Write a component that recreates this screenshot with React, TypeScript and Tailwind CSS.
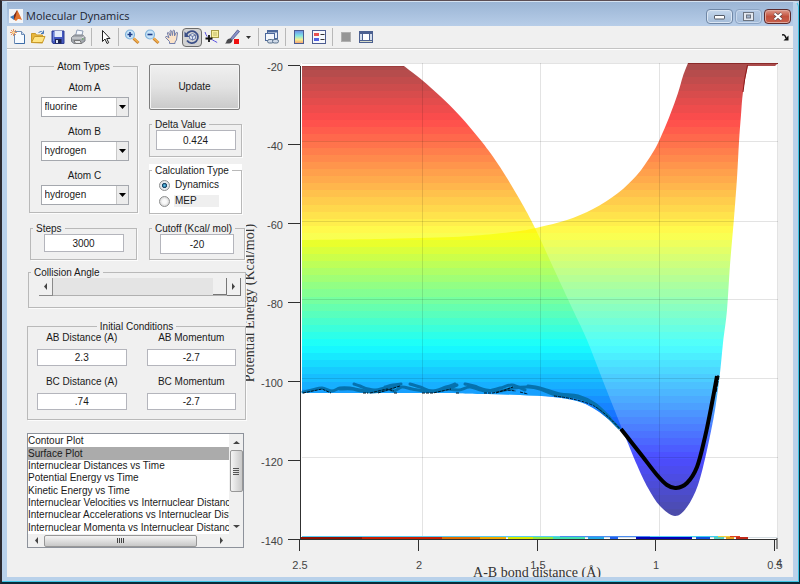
import { useState } from "react";
import type { ReactNode } from "react";

type Point = [number, number];

const plotNames = [
  "Contour Plot",
  "Surface Plot",
  "Internuclear Distances vs Time",
  "Potential Energy vs Time",
  "Kinetic Energy vs Time",
  "Internuclear Velocities vs Internuclear Distance",
  "Internuclear Accelerations vs Internuclear Distance",
  "Internuclear Momenta vs Internuclear Distance",
];

// Catmull-Rom spline through the points, as cubic bezier segments
function curve(points: Point[]) {
  return points
    .slice(0, -1)
    .map((p1, i) => {
      const p0 = points[i - 1] ?? p1;
      const p2 = points[i + 1];
      const p3 = points[i + 2] ?? p2;
      const c1 = [p1[0] + (p2[0] - p0[0]) / 6, p1[1] + (p2[1] - p0[1]) / 6];
      const c2 = [p2[0] - (p3[0] - p1[0]) / 6, p2[1] - (p3[1] - p1[1]) / 6];
      return `C${c1.join(" ")} ${c2.join(" ")} ${p2.join(" ")}`;
    })
    .join(" ");
}

const SURFACE_TOP = 63;
const SURFACE_BOTTOM = 516;
const LEVELS = 64;

// jet colormap, t = 0 is dark blue and t = 1 is dark red
function jet(t: number) {
  const channel = (center: number) =>
    Math.round(255 * Math.max(0, Math.min(1, 1.5 - Math.abs(4 * t - center))));
  return `rgb(${channel(3)}, ${channel(2)}, ${channel(1)})`;
}

const jetStops = Array.from({ length: LEVELS }, (_, i) => ({
  color: jet(1 - (i + 0.5) / LEVELS),
  from: i / LEVELS,
  to: (i + 1) / LEVELS,
}));

const backEdge: Point[] = [
  [404, 66], [422, 80], [440, 96], [460, 116], [482, 142], [500, 167], [520, 200],
  [535, 228], [553, 267], [573, 310], [587, 340], [603, 381], [623, 431],
];
const channelFloor: Point[] = [
  [623, 431], [607, 418], [593, 408], [577, 401], [553, 397], [520, 395], [480, 394], [430, 393], [302, 393],
];
const frontTop: Point[] = [
  [302, 240], [380, 239], [453, 237], [493, 234], [520, 231], [540, 227], [567, 220], [593, 209],
  [618, 193], [637, 175], [650, 157], [659, 141], [670, 115], [678, 93], [683, 76], [688, 63],
];
const frontRight: Point[] = [
  [748, 65], [743, 92], [741, 115], [739, 142], [737, 178], [734, 218], [730, 265], [727, 310],
  [723, 343], [720, 373], [715, 410], [707, 450], [698, 485], [687, 507], [675, 516], [660, 506],
  [648, 488], [637, 465], [623, 431],
];
const trajectory: Point[] = [
  [621, 429], [632, 443], [643, 457], [657, 475], [667, 485], [676, 488], [687, 483], [697, 467],
  [705, 437], [712, 403], [717, 376],
];
const ripples: Point[][] = [
  [[303, 392], [312, 390], [322, 388], [332, 391], [340, 388], [350, 388], [360, 390], [372, 392], [385, 390], [399, 385]],
  [[340, 389], [352, 389], [362, 391], [376, 390], [386, 388], [394, 391], [402, 387], [412, 389], [425, 391], [437, 391], [450, 388], [457, 385]],
  [[354, 384], [360, 386], [368, 389], [380, 391]],
  [[385, 387], [393, 385], [401, 384]],
  [[410, 384], [420, 387], [432, 391], [446, 387], [455, 384]],
  [[446, 389], [459, 390], [470, 387], [485, 391], [500, 388], [512, 385], [525, 390]],
  [[465, 384], [474, 386], [486, 390], [500, 391], [514, 388], [528, 387], [540, 389], [556, 395], [575, 397], [592, 403], [606, 415], [619, 428]],
  [[528, 386], [540, 388], [560, 394], [578, 396], [595, 404], [610, 418]],
];

const floorBands = [
  { x: 300, w: 62, color: "#8f1000" },
  { x: 362, w: 80, color: "#c81e00" },
  { x: 442, w: 38, color: "#e06c00" },
  { x: 480, w: 26, color: "#f0a800" },
  { x: 508, w: 25, color: "#d8e800" },
  { x: 533, w: 20, color: "#90e840" },
  { x: 553, w: 32, color: "#40e0b0" },
  { x: 588, w: 16, color: "#20a8e8" },
  { x: 610, w: 8, color: "#2060f0" },
  { x: 636, w: 56, color: "#0000b8" },
  { x: 696, w: 14, color: "#1050e0" },
  { x: 714, w: 10, color: "#50d0c0" },
  { x: 726, w: 8, color: "#e8a020" },
  { x: 736, w: 12, color: "#c02818" },
];

const yTicks = [
  { y: 66, label: "-20" },
  { y: 145, label: "-40" },
  { y: 224, label: "-60" },
  { y: 303, label: "-80" },
  { y: 382, label: "-100" },
  { y: 461, label: "-120" },
  { y: 540, label: "-140" },
];
const xTicks = [
  { x: 300, label: "2.5" },
  { x: 419, label: "2" },
  { x: 538, label: "1.5" },
  { x: 656, label: "1" },
  { x: 775, label: "0.5" },
];

function SurfaceChart() {
  const backPath = `M302 66 L404 66 ${curve(backEdge)} ${curve(channelFloor)} Z`;
  const frontPath = `M302 240 ${curve(frontTop)} L778 63 L775 66 L748 66 L748 65 ${curve(frontRight)} ${curve(channelFloor)} Z`;

  return (
    <svg viewBox="246 50 547 527" className="block h-auto w-full" role="img" aria-label="Surface plot">
      <defs>
        <linearGradient id="jet" gradientUnits="userSpaceOnUse" x1="0" x2="0" y1={SURFACE_TOP} y2={SURFACE_BOTTOM}>
          {jetStops.flatMap((s, i) => [
            <stop key={`${i}a`} offset={s.from} stopColor={s.color} />,
            <stop key={`${i}b`} offset={s.to} stopColor={s.color} />,
          ])}
        </linearGradient>
      </defs>

      <rect x="301" y="63" width="477" height="477" fill="#fff" />

      <path d={backPath} fill="url(#jet)" fillOpacity="0.7" />
      <path d={frontPath} fill="url(#jet)" fillOpacity="0.7" />
      <path d="M688 63.5 H778" stroke="#9c3030" />
      <path d="M302 66.5 H404" stroke="#9c3c3c" />
      <path d="M747.500 65 Q744 80 743 92" fill="none" stroke="#8c1818" />

      {/* Grid */}
      <g stroke="#000" strokeOpacity="0.11">
        {[422.5, 540.5, 659.5, 777.5].map((x) => (
          <path key={x} d={`M${x} 63 V538`} />
        ))}
        {[63.5, 141.5, 221.5, 299.5, 378.5, 457.5].map((y) => (
          <path key={y} d={`M302 ${y} H778`} />
        ))}
      </g>

      {/* Trajectory */}
      <g fill="none" stroke="#0672ae" strokeWidth="3" strokeLinejoin="round" strokeLinecap="round">
        {ripples.map((points, i) => (
          <path key={i} d={`M${points[0].join(" ")} ${curve(points)}`} />
        ))}
      </g>
      <g fill="none" stroke="#001420" strokeDasharray="3 1">
        <path d="M303 393 L322 389 L331 393 M363 393 H368 M370 393 L387 389 L394 391 M378 393 L400 386" />
        <path d="M394 393 H397 M422 393 H433 L451 389 M456 393 H459 M484 393 H493 L507 390 L516 391 M496 393 L513 387" />
        <path d="M520 392 L528 394 M554 396 Q580 399 594 406 Q606 413 621 430" />
      </g>
      <path d={`M621 429 ${curve(trajectory)}`} fill="none" stroke="#000" strokeWidth="4" />
      <path d="M717 376 H719 L716 392" fill="none" stroke="#000" strokeDasharray="6 1" />

      {/* Contours projected on the floor */}
      <rect x="302" y="536" width="410" height="1" fill="#58cdf5" />
      <rect x="560" y="536" width="90" height="1" fill="#4c8cf0" />
      <rect x="302" y="537" width="476" height="1" fill="#d5dde2" />
      {floorBands.map((b) => (
        <rect key={b.x} x={b.x} y="537" width={b.w} height="2" fill={b.color} />
      ))}
      <path d="M690 536.5 H718" stroke="#40d0f0" />
      <path d="M718 536.5 H730" stroke="#f0d040" />
      <path d="M730 536.5 H740" stroke="#e04020" />

      {/* Axes */}
      <g stroke="#303030" fill="none">
        <path d="M300.5 66 V540 M300 539.5 H777" />
        <path d="M777 538 L777 549" />
        {yTicks.map((t) => (
          <path key={t.label} d={`M288 ${t.y - 0.5} H300`} />
        ))}
        {xTicks.map((t) => (
          <path key={t.label} d={`M${t.x - 0.5} 540 V551`} />
        ))}
      </g>
      <g fill="#444" fontSize="11" fontFamily='"Liberation Sans", Arial, sans-serif'>
        {yTicks.map((t) => (
          <text key={t.label} x="283" y={t.y + 5} textAnchor="end">{t.label}</text>
        ))}
        {xTicks.map((t) => (
          <text key={t.label} x={t.x} y="569" textAnchor="middle">{t.label}</text>
        ))}
        <text x="776" y="567">4</text>
      </g>
      <g fill="#333" fontSize="14" fontFamily='"Liberation Serif", "Times New Roman", serif'>
        <text x="537" y="577" textAnchor="middle">A-B bond distance (Å)</text>
        <text transform="translate(254 303) rotate(-90)" textAnchor="middle">Potential Energy (Kcal/mol)</text>
      </g>
    </svg>
  );
}

function Icon({ children }: { children: ReactNode }) {
  return (
    <svg viewBox="0 0 16 16" className="h-4 w-4" aria-hidden="true">
      {children}
    </svg>
  );
}

const toolGroups: { name: string; icon: ReactNode }[][] = [
  [
    {
      name: "New Figure",
      icon: (
        <>
          <path d="M4.5 2.5h7l3 3v9h-10z" fill="#f6faff" stroke="#6f8cb4" />
          <path d="M11.5 2.5v3h3" fill="#c5d8f0" stroke="#6f8cb4" />
          <path d="M14.5 6v8.5h-9" stroke="#3f6ea8" fill="none" />
          <path d="M3.5 0v7M0 3.5h7M1 1l5 5M6 1L1 6" stroke="#e07a3c" strokeWidth=".8" />
          <circle cx="3.5" cy="3.5" r="1.3" fill="#ffe0a0" />
        </>
      ),
    },
    {
      name: "Open File",
      icon: (
        <>
          <path d="M1.5 13.5v-9h4l1 1.5h6v8z" fill="#e8b63c" stroke="#c99a2a" />
          <path d="M1.5 13.5l3-6h10.5l-2.5 6z" fill="#ffe482" stroke="#c99a2a" />
          <path d="M8.5 3.5q3-2.5 5 .5M13.5 1.5v3h-2.5" fill="none" stroke="#4878b8" />
        </>
      ),
    },
    {
      name: "Save Figure",
      icon: (
        <>
          <path d="M2 2h12v12.5H3L2 13z" fill="#4458c0" stroke="#2c3c94" />
          <rect x="4.5" y="2" width="7.5" height="6" fill="#e4ecfa" />
          <rect x="5" y="10" width="6.5" height="4.5" fill="#1c2450" />
          <rect x="6" y="11" width="2" height="3" fill="#dfe6f5" />
          <path d="M3.5 3v9" stroke="#6f86dc" />
        </>
      ),
    },
    {
      name: "Print Figure",
      icon: (
        <>
          <path d="M5.5 7l1.5-6 6 1-1.5 6z" fill="#f4f8ff" stroke="#8d9cb4" />
          <path d="M1.5 8.5l3-2.5h8l2.5 2v4l-3.5 2.5H4l-2.5-2z" fill="#a2a6ac" stroke="#7c8088" />
          <path d="M2 9h9.5l3-1.5" fill="none" stroke="#dfe1e4" />
          <path d="M4 11.5h6l1.5 3H5.5z" fill="#e6e7e9" stroke="#777" />
          <circle cx="12.8" cy="10" r=".7" fill="#55b04c" />
        </>
      ),
    },
  ],
  [
    {
      name: "Edit Plot",
      icon: <path d="M5.5 1.5v11l2.5-2.5 2 4.5 1.7-.8-2-4.2h3.300z" fill="#fff" stroke="#222" />,
    },
  ],
  [
    {
      name: "Zoom In",
      icon: (
        <>
          <path d="M9.5 9.5l5 4.500" stroke="#c88434" strokeWidth="3" />
          <path d="M9.5 9l5 4.500" stroke="#f4b04c" strokeWidth="1.500" />
          <circle cx="6" cy="5.5" r="4.500" fill="#c8e4f8" stroke="#82b4dc" strokeWidth="1.200" />
          <path d="M6 3v5M3.5 5.5h5" stroke="#1d3c88" strokeWidth="1.600" />
        </>
      ),
    },
    {
      name: "Zoom Out",
      icon: (
        <>
          <path d="M9.5 9.5l5 4.500" stroke="#c88434" strokeWidth="3" />
          <path d="M9.5 9l5 4.500" stroke="#f4b04c" strokeWidth="1.500" />
          <circle cx="6" cy="5.5" r="4.500" fill="#c8e4f8" stroke="#82b4dc" strokeWidth="1.200" />
          <path d="M3.5 5.5h5" stroke="#1d3c88" strokeWidth="1.600" />
        </>
      ),
    },
    {
      name: "Pan",
      icon: (
        <path
          d="M5.5 14.5v-2L1.5 8.5q0-1.5 1.5-1l2 1.5-1.7-5q.5-1.5 1.5 0L6.5 7 6 2q.8-1.3 1.6 0l.8 4.500L9 1.500q1-1 1.5.2V7l1.700-3.500q1.200-.7 1.300.5L12.500 11l-1.500 2v1.500z"
          fill="#fbe3c8"
          stroke="#7480ac"
        />
      ),
    },
    {
      name: "Rotate 3D",
      icon: (
        <>
          <path d="M2.5 5.5A6 6 0 1 1 3 11.5" fill="none" stroke="#3c5088" strokeWidth="1.800" />
          <path d="M.5 2.5v5.500h5z" fill="#3c5088" />
          <path d="M8.5 4.5l3 1.500v3.500l-3 1.500-3-1.500V6zM5.500 6l3 1.500 3-1.500M8.500 7.500v3.500" fill="#dbe4f4" stroke="#5468a0" strokeWidth=".8" />
        </>
      ),
    },
    {
      name: "Data Cursor",
      icon: (
        <>
          <path d="M1 3q2 6 5 7t8 4" fill="none" stroke="#5a50e0" strokeDasharray="5 1" />
          <rect x="7.5" y="1.5" width="7" height="7" fill="#f7f0a0" stroke="#a59c4c" />
          <path d="M9 4h4M9 6h4" stroke="#c0b870" />
          <path d="M5 6v7M1.5 9.5h7" stroke="#111" strokeWidth="1.800" />
        </>
      ),
    },
    {
      name: "Brush",
      icon: (
        <>
          <path d="M6.5 9.5l7-8.500 2 1.500-7 8z" fill="#8a93cc" stroke="#4c5688" strokeWidth=".8" />
          <path d="M1 14.5q1.500-1 1.700-3 1.500-2.500 3.800-2l2 1.700q-.5 3-3.500 3.300z" fill="#4a4a4e" />
          <rect x="10" y="10" width="5" height="5" fill="#f01010" />
        </>
      ),
    },
  ],
  [
    {
      name: "Link Plot",
      icon: (
        <>
          <rect x="3.5" y="1.5" width="10" height="8" fill="#e8effa" stroke="#4c689c" />
          <path d="M3.5 2.5h10" stroke="#4c689c" strokeWidth="2" />
          <rect x="1.5" y="4.5" width="9" height="7" fill="#f4f7fc" stroke="#4c689c" />
          <rect x="3.5" y="10.5" width="6" height="3.500" rx="1.700" fill="#d0dae8" stroke="#58708c" />
          <rect x="8.5" y="10.5" width="6" height="3.500" rx="1.700" fill="#d0dae8" stroke="#58708c" />
        </>
      ),
    },
  ],
  [
    {
      name: "Insert Colorbar",
      icon: (
        <>
          <defs>
            <linearGradient id="bar" x1="0" x2="0" y1="0" y2="1">
              <stop offset="0" stopColor="#6c8ce8" />
              <stop offset=".4" stopColor="#80e4e4" />
              <stop offset=".7" stopColor="#f4f090" />
              <stop offset="1" stopColor="#f49a70" />
            </linearGradient>
          </defs>
          <rect x="3.5" y="1.5" width="9" height="13" fill="url(#bar)" stroke="#4c5c90" />
        </>
      ),
    },
    {
      name: "Insert Legend",
      icon: (
        <>
          <rect x="1.5" y="1.5" width="13" height="13" fill="#f6f8fc" stroke="#4c5c90" />
          <rect x="3" y="4" width="5" height="3" fill="#e85050" />
          <rect x="3" y="9" width="5" height="3" fill="#5060e0" />
          <path d="M9.5 5.5h4M9.5 10.5h4" stroke="#333" />
        </>
      ),
    },
  ],
  [
    {
      name: "Hide Plot Tools",
      icon: <rect x="3.5" y="3.5" width="9" height="9" fill="#969696" stroke="#b0b0b0" />,
    },
    {
      name: "Show Plot Tools",
      icon: (
        <>
          <rect x="1" y="2" width="14" height="12" fill="#4c6090" />
          <rect x="2" y="5" width="2" height="6" fill="#d4ddec" />
          <rect x="5" y="5" width="6" height="6" fill="#fff" />
          <rect x="12" y="5" width="2" height="6" fill="#d4ddec" />
          <rect x="2" y="12" width="12" height="1" fill="#d8dcc8" />
        </>
      ),
    },
  ],
];

function Toolbar() {
  return (
    <div role="toolbar" className="flex h-[23px] items-center border-b border-[#c4c4c4] bg-[#f0f0f0] pl-px">
      {toolGroups.map((group, g) => (
        <div key={g} className="flex items-center">
          {g > 0 && <div className="mx-[3px] h-[18px] w-px bg-[#b8b8b8]" />}
          {group.map((tool) => (
            <button
              key={tool.name}
              type="button"
              aria-label={tool.name}
              className={
                tool.name === "Rotate 3D"
                  ? "flex h-[19px] w-5 items-center justify-center rounded-sm border border-[#6c6c6c] bg-[#d2d2d2]"
                  : "flex h-5 w-5 items-center justify-center"
              }
            >
              <Icon>{tool.icon}</Icon>
            </button>
          ))}
          {g === 2 && (
            <button type="button" aria-label="Brush options" className="flex h-5 w-[13px] items-center justify-center">
              <svg viewBox="0 0 5 3" className="w-[5px]"><path d="M0 0h5L2.5 3z" fill="#333" /></svg>
            </button>
          )}
        </div>
      ))}
      <button type="button" aria-label="Dock Figure" className="mr-1 ml-auto">
        <svg viewBox="0 0 7 7" className="block w-[7px]">
          <path d="M0 1q3-1 4 3" stroke="#111" strokeWidth="1.500" fill="none" />
          <path d="M6.5 1.5V6.5H1.5z" fill="#111" />
        </svg>
      </button>
    </div>
  );
}

function TitleBar() {
  return (
    <header className="flex h-6 items-center bg-gradient-to-b from-[#9bb5d5] to-[#b7cde8] pt-1 pr-[2px] pl-[2px]">
      <svg viewBox="0 0 14 14" className="h-[14px] w-[14px]" aria-hidden="true">
        <rect width="14" height="14" fill="#f3f5f8" />
        <path d="M1 8l4-2 2-2 1 5-3 2z" fill="#3f78b8" />
        <path d="M5 6l3-5 1 3-2 6-2 1z" fill="#7c2c18" />
        <path d="M8 1q2 3 5 10-3-1.500-4-1l-2 2-2-1.500Q7 8 8 1z" fill="#e0702c" />
      </svg>
      <h1 className="ml-[3px] font-['Open_Sans','Noto_Sans',sans-serif] text-[11px] leading-4 text-[#1c2430]">Molecular Dynamics</h1>
      <div className="ml-auto flex gap-[2px]">
        <button type="button" aria-label="Minimize" className="flex h-[15px] w-[27px] items-center justify-center rounded-sm border border-[#6f87a6] bg-gradient-to-b from-[#c6d8ec] to-[#a3bbd8] shadow-[inset_0_0_0_1px_#dbe6f3]">
          <svg viewBox="0 0 11 5" className="mt-[3px] w-[11px]"><rect x=".5" y=".5" width="10" height="3.500" rx=".5" fill="#fff" stroke="#555c68" /></svg>
        </button>
        <button type="button" aria-label="Maximize" className="flex h-[15px] w-[27px] items-center justify-center rounded-sm border border-[#8ba3c2] bg-gradient-to-b from-[#b4c9e3] to-[#a3bbd8] shadow-[inset_0_0_0_1px_#c8d8ec]">
          <svg viewBox="0 0 11 9" className="w-[11px]">
            <rect x=".5" y=".5" width="10" height="8" fill="#e4e9f0" stroke="#6c7480" />
            <rect x="3.5" y="3" width="4" height="3" fill="#a3b4cc" stroke="#6c7480" />
          </svg>
        </button>
        <button type="button" aria-label="Close" className="flex h-[15px] w-[27px] items-center justify-center rounded-sm border border-[#5c2a2c] bg-gradient-to-b from-[#dd9a8c] via-[#c2503c] to-[#c8604c] shadow-[inset_0_0_0_1px_#e0a89c]">
          <svg viewBox="0 0 10 9" className="w-[10px]">
            <path d="M1.5 1.5l7 6M8.5 1.5l-7 6" stroke="#5c4448" strokeWidth="3.600" />
            <path d="M1.5 1.5l7 6M8.5 1.5l-7 6" stroke="#fff" strokeWidth="2.200" />
          </svg>
        </button>
      </div>
    </header>
  );
}

function Panel({ title, className, center, children }: { title: string; className: string; center?: boolean; children: ReactNode }) {
  return (
    <fieldset className={`border border-[#b9b9b9] shadow-[1px_1px_0_#fcfcfc] ${className}`}>
      <legend className={`h-3 px-[3px] leading-[14px] ${center ? "mx-auto" : "ml-[2px]"}`}>{title}</legend>
      {children}
    </fieldset>
  );
}

function AtomSelect({ label, value, onChange }: { label: string; value: string; onChange: (v: string) => void }) {
  return (
    <label className="flex flex-col items-center gap-[3px]">
      <span>{label}</span>
      <span className="relative block">
        <select
          value={value}
          onChange={(e) => onChange(e.target.value)}
          className="block h-5 w-[88px] appearance-none border border-[#a5a8ae] bg-white pl-[3px] text-[10px] leading-3"
        >
          <option>fluorine</option>
          <option>hydrogen</option>
        </select>
        <span className="pointer-events-none absolute inset-y-px right-px flex w-3 items-center justify-center border-l border-[#c8c8c8] bg-[#ececec]">
          <svg viewBox="0 0 7 4" className="w-[7px]"><path d="M0 0h7L3.5 4z" fill="#000" /></svg>
        </span>
      </span>
    </label>
  );
}

function NumberBox({ label, value, className }: { label: string; value: string; className: string }) {
  return (
    <input
      aria-label={label}
      defaultValue={value}
      className={`block min-w-0 border border-[#b4b5bc] bg-white text-center text-[10px] leading-3 ${className}`}
    />
  );
}

function Condition({ label, value }: { label: string; value: string }) {
  return (
    <label className="flex flex-col items-center gap-[5px]">
      <span>{label}</span>
      <NumberBox label={label} value={value} className="h-[17px] w-full" />
    </label>
  );
}

function Radio({ label, checked, onChange }: { label: string; checked: boolean; onChange: () => void }) {
  return (
    <label className="flex h-4 items-center gap-1">
      <input
        type="radio"
        name="calculation"
        checked={checked}
        onChange={onChange}
        className="h-[11px] w-[11px] appearance-none rounded-full border border-[#8e8f8f] bg-[#e8e8e8] bg-[radial-gradient(circle,#fafafa_30%,#d4d4d4_80%)] checked:bg-[radial-gradient(circle,#58c4ec_8%,#123c60_34%,#e4e8ec_46%)]"
      />
      <span className={label === "MEP" ? "w-[45px] bg-[#efefef] pl-px" : "pl-px"}>{label}</span>
    </label>
  );
}

function Arrow({ d }: { d: string }) {
  return (
    <svg viewBox="0 0 7 7" className="w-[7px]" aria-hidden="true">
      <path d={d} fill="#444" />
    </svg>
  );
}

function PlotList() {
  const [selected, setSelected] = useState("Surface Plot");

  return (
    <div className="grid h-[115px] w-[217px] grid-cols-[1fr_14px] grid-rows-[1fr_13px] border border-[#8d929b] bg-[#f0f0f0]">
      <ul role="listbox" aria-label="Plot type" className="grid auto-rows-fr overflow-hidden bg-white pt-px">
        {plotNames.map((name) => (
          <li
            key={name}
            role="option"
            aria-selected={name === selected}
            onClick={() => setSelected(name)}
            className={`flex items-center overflow-hidden leading-3 whitespace-nowrap ${name === selected ? "bg-[#ababab]" : ""}`}
          >
            {name}
          </li>
        ))}
      </ul>
      <div className="flex flex-col items-center">
        <button type="button" aria-label="Scroll up" className="flex h-4 items-center"><Arrow d="M0 5h7L3.5 2z" /></button>
        <div className="flex h-[42px] w-[13px] flex-col items-center justify-center gap-px rounded-xs border border-[#979797] bg-gradient-to-r from-[#f5f5f5] to-[#c8c8c8]">
          <i className="h-px w-[6px] bg-[#555]" />
          <i className="h-px w-[6px] bg-[#555]" />
          <i className="h-px w-[6px] bg-[#555]" />
          <i className="h-px w-[6px] bg-[#555]" />
        </div>
        <button type="button" aria-label="Scroll down" className="mt-auto flex h-4 items-center"><Arrow d="M0 2h7L3.5 5z" /></button>
      </div>
      <div className="flex items-center">
        <button type="button" aria-label="Scroll left" className="flex w-4 justify-center"><Arrow d="M5 0v7L2 3.5z" /></button>
        <div className="flex h-3 w-[153px] items-center justify-center gap-px rounded-xs border border-[#979797] bg-gradient-to-b from-[#f5f5f5] to-[#c8c8c8]">
          <i className="h-[5px] w-px bg-[#444]" />
          <i className="h-[5px] w-px bg-[#444]" />
          <i className="h-[5px] w-px bg-[#444]" />
          <i className="h-[5px] w-px bg-[#444]" />
        </div>
        <button type="button" aria-label="Scroll right" className="ml-auto flex w-4 justify-center"><Arrow d="M2 0v7l3-3.5z" /></button>
      </div>
    </div>
  );
}

export default function App() {
  const [atoms, setAtoms] = useState({ A: "fluorine", B: "hydrogen", C: "hydrogen" });
  const [calculation, setCalculation] = useState("Dynamics");
  const [angle, setAngle] = useState(100);

  return (
    <div className="flex min-h-screen flex-col border-t border-r border-b-2 border-l-2 border-t-[#5b4e55] border-r-[#0b2a38] border-b-[#0b2a38] border-l-[#2c2a30] bg-[#b9d1ea] font-['Liberation_Sans',Arial,sans-serif] text-[10px] leading-3 text-[#1a1a1a]">
      <div className="flex flex-1 flex-col rounded-t-md border-t border-r border-b border-t-[#d5e2f1] border-r-[#3cc4e4] border-b-[#3cc4e4] bg-[#b9d1ea] px-[5px] pb-1">
        <TitleBar />
        <main className="flex flex-1 flex-col bg-[#f0f0f0]">
          <Toolbar />
          <div className="flex flex-1 border-t border-white">
            <div className="flex w-[239px] shrink-0 flex-col pt-[10px] pl-5">
              <div className="flex items-start gap-[11px] pl-[2px]">
                <Panel title="Atom Types" center className="h-[153px] w-[109px]">
                  <div className="flex flex-col gap-[9px] pt-[10px] pl-[2px]">
                    <AtomSelect label="Atom A" value={atoms.A} onChange={(A) => setAtoms({ ...atoms, A })} />
                    <AtomSelect label="Atom B" value={atoms.B} onChange={(B) => setAtoms({ ...atoms, B })} />
                    <AtomSelect label="Atom C" value={atoms.C} onChange={(C) => setAtoms({ ...atoms, C })} />
                  </div>
                </Panel>

                <div className="flex w-[93px] flex-col pt-1">
                  <button
                    type="button"
                    className="h-[46px] w-[91px] rounded-xs border border-[#7e7e7e] bg-gradient-to-b from-[#f0f0f0] via-[#e2e2e2] to-[#c9c9c9] shadow-[inset_0_0_0_1px_#f4f4f4]"
                  >
                    Update
                  </button>
                  <Panel title="Delta Value" className="mt-2 h-[39px]">
                    <NumberBox label="Delta Value" value="0.424" className="mx-auto h-5 w-[80px]" />
                  </Panel>
                  <div className="mt-[7px] bg-white">
                    <Panel title="Calculation Type" className="h-[50px]">
                      <div className="pt-px pl-[9px]">
                        <Radio label="Dynamics" checked={calculation === "Dynamics"} onChange={() => setCalculation("Dynamics")} />
                        <Radio label="MEP" checked={calculation === "MEP"} onChange={() => setCalculation("MEP")} />
                      </div>
                    </Panel>
                  </div>
                </div>
              </div>

              <div className="mt-2 flex gap-3 pl-[3px]">
                <Panel title="Steps" className="h-[38px] w-[107px]">
                  <NumberBox label="Steps" value="3000" className="mx-auto h-[18px] w-[80px]" />
                </Panel>
                <Panel title="Cutoff (Kcal/ mol)" className="h-[38px] w-[96px]">
                  <NumberBox label="Cutoff (Kcal/ mol)" value="-20" className="mx-auto h-5 w-[74px]" />
                </Panel>
              </div>

              <Panel title="Collision Angle" className="mt-[6px] ml-px h-[42px]">
                <div className="ml-[10px] flex h-[18px] w-[202px]">
                  <button type="button" aria-label="Decrease angle" onClick={() => setAngle(angle - 5)} className="flex w-[14px] shrink-0 items-center justify-center border-r border-b border-[#8a8a8a]">
                    <Arrow d="M5 0v7L2 3.5z" />
                  </button>
                  <input
                    type="range"
                    aria-label="Collision Angle"
                    value={angle}
                    onChange={(e) => setAngle(Number(e.target.value))}
                    className="h-[18px] min-w-0 flex-1 appearance-none border-b border-[#b0b0b0] bg-[#e4e4e4] [&::-webkit-slider-thumb]:h-[17px] [&::-webkit-slider-thumb]:w-[14px] [&::-webkit-slider-thumb]:appearance-none [&::-webkit-slider-thumb]:border-r [&::-webkit-slider-thumb]:border-b [&::-webkit-slider-thumb]:border-[#777] [&::-webkit-slider-thumb]:bg-[#f0f0f0]"
                  />
                  <button type="button" aria-label="Increase angle" onClick={() => setAngle(angle + 5)} className="flex w-[14px] shrink-0 items-center justify-center border-r border-b border-[#777]">
                    <Arrow d="M2 0v7l3-3.5z" />
                  </button>
                </div>
              </Panel>

              <Panel title="Initial Conditions" center className="mt-3 h-[100px]">
                <div className="grid grid-cols-2 gap-x-5 gap-y-[10px] px-[9px]">
                  <Condition label="AB Distance (A)" value="2.3" />
                  <Condition label="AB Momentum" value="-2.7" />
                  <Condition label="BC Distance (A)" value=".74" />
                  <Condition label="BC Momentum" value="-2.7" />
                </div>
              </Panel>

              <div className="mt-[13px]">
                <PlotList />
              </div>
            </div>

            <div className="min-w-0 flex-1">
              <SurfaceChart />
            </div>
          </div>
        </main>
      </div>
    </div>
  );
}
